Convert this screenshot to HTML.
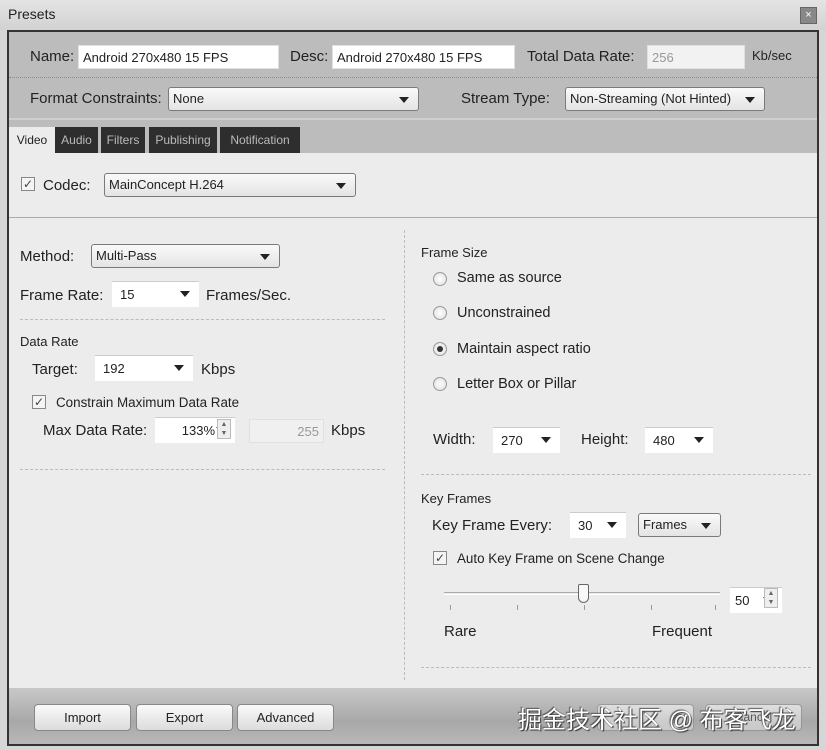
<!DOCTYPE html>
<html><head><meta charset="utf-8"><style>
*{box-sizing:border-box;margin:0;padding:0}
body{width:826px;height:750px;background:#d6d6d6;font-family:"Liberation Sans","DejaVu Sans",sans-serif;font-size:15px;color:#222;position:relative;overflow:hidden}
.a{position:absolute}
.inp{position:absolute;background:#fff;border:1px solid #e0e0e0;font-size:13px;padding:3px 4px;height:24px;line-height:17px;white-space:nowrap}
.sel{position:absolute;background:linear-gradient(#fafafa,#e4e4e4);border:1px solid #7a7a7a;border-radius:3px;font-size:13px;padding:3px 4px;height:24px;line-height:16px;white-space:nowrap}
.sel:after,.cmb:after{content:"";position:absolute;right:9px;top:9px;border-left:5px solid transparent;border-right:5px solid transparent;border-top:6px solid #222}
.cmb{position:absolute;background:#fff;border-top:1px solid #ccc;font-size:13px;padding:4px 8px;height:26px;line-height:17px}
.lbl{position:absolute;white-space:nowrap}
.cb{position:absolute;width:14px;height:14px;border:1px solid #888;background:#f4f4f4;font-size:12px;line-height:12px;text-align:center;color:#444}
.rd{position:absolute;width:14px;height:14px;border-radius:50%;border:1px solid #999;background:radial-gradient(#fff,#ddd)}
.rd.on:after{content:"";position:absolute;left:3px;top:3px;width:6px;height:6px;border-radius:50%;background:#333}
.dash{position:absolute;height:0;border-top:1px dashed #bbb}
.tab{position:absolute;top:127px;height:26px;background:#2e2e2e;color:#bbb;font-size:12px;line-height:26px;text-align:center}
.btn{position:absolute;top:704px;height:27px;border:1px solid #888;border-radius:4px;background:linear-gradient(#fafafa,#dcdcdc);font-size:13px;text-align:center;line-height:25px}
.spin{position:absolute;width:14px;height:20px;border:1px solid #bbb;background:#eee;font-size:7px;line-height:9px;text-align:center;color:#666}
.r{font-size:14.5px}
</style></head><body>
<div class="a" style="left:0;top:0;width:826px;height:30px;background:linear-gradient(#e4e4e4,#d2d2d2)"></div>
<div class="lbl" style="left:8px;top:6px;font-size:14px">Presets</div>
<div class="a" style="left:800px;top:7px;width:17px;height:17px;border:1px solid #666;background:#888;color:#fff;font-size:11px;text-align:center;line-height:15px">×</div>
<div class="a" style="left:7px;top:30px;width:812px;height:716px;border:2px solid #333;background:#ececec"></div>
<div class="a" style="left:9px;top:32px;width:808px;height:121px;background:#bcbcbc"></div>
<div class="a" style="left:9px;top:77px;width:808px;border-top:1px dotted #888"></div>
<div class="a" style="left:9px;top:118px;width:808px;height:2px;background:#cfcfcf"></div>
<div class="lbl" style="left:30px;top:48px">Name:</div>
<div class="inp" style="left:78px;top:45px;width:201px">Android 270x480 15 FPS</div>
<div class="lbl" style="left:290px;top:48px">Desc:</div>
<div class="inp" style="left:332px;top:45px;width:183px">Android 270x480 15 FPS</div>
<div class="lbl" style="left:527px;top:48px">Total Data Rate:</div>
<div class="inp" style="left:647px;top:45px;width:98px;color:#999;background:#f2f2f2">256</div>
<div class="lbl" style="left:752px;top:48px;font-size:13px">Kb/sec</div>
<div class="lbl" style="left:30px;top:90px">Format Constraints:</div>
<div class="sel" style="left:168px;top:87px;width:251px">None</div>
<div class="lbl" style="left:461px;top:90px">Stream Type:</div>
<div class="sel" style="left:565px;top:87px;width:200px">Non-Streaming (Not Hinted)</div>
<div class="a" style="left:9px;top:127px;width:46px;height:27px;background:#ececec;font-size:12px;line-height:27px;text-align:center">Video</div>
<div class="tab" style="left:55px;width:43px">Audio</div>
<div class="tab" style="left:101px;width:44px">Filters</div>
<div class="tab" style="left:149px;width:68px">Publishing</div>
<div class="tab" style="left:220px;width:80px">Notification</div>
<div class="cb" style="left:21px;top:177px">✓</div>
<div class="lbl" style="left:43px;top:177px">Codec:</div>
<div class="sel" style="left:104px;top:173px;width:252px">MainConcept H.264</div>
<div class="a" style="left:9px;top:217px;width:808px;border-top:1px solid #aaa"></div>
<div class="a" style="left:404px;top:230px;height:450px;border-left:1px dashed #bbb"></div>
<div class="lbl" style="left:20px;top:248px">Method:</div>
<div class="sel" style="left:91px;top:244px;width:189px">Multi-Pass</div>
<div class="lbl" style="left:20px;top:287px">Frame Rate:</div>
<div class="cmb" style="left:112px;top:281px;width:87px">15</div>
<div class="lbl" style="left:206px;top:287px">Frames/Sec.</div>
<div class="dash" style="left:20px;top:319px;width:365px"></div>
<div class="lbl" style="left:20px;top:334px;font-size:13px">Data Rate</div>
<div class="lbl" style="left:32px;top:361px">Target:</div>
<div class="cmb" style="left:95px;top:355px;width:98px">192</div>
<div class="lbl" style="left:201px;top:361px">Kbps</div>
<div class="cb" style="left:32px;top:395px">✓</div>
<div class="lbl" style="left:56px;top:395px;font-size:13.4px">Constrain Maximum Data Rate</div>
<div class="lbl" style="left:43px;top:422px">Max Data Rate:</div>
<div class="cmb" style="left:155px;top:417px;width:80px;text-align:right;padding-right:20px">133%</div>
<div class="spin" style="left:217px;top:419px">▲<br>▼</div>
<div class="inp" style="left:249px;top:419px;width:75px;text-align:right;color:#999;background:#f0f0f0">255</div>
<div class="lbl" style="left:331px;top:422px">Kbps</div>
<div class="dash" style="left:20px;top:469px;width:365px"></div>
<div class="lbl" style="left:421px;top:245px;font-size:13px">Frame Size</div>
<div class="rd" style="left:433px;top:272px"></div><div class="lbl r" style="left:457px;top:270px">Same as source</div>
<div class="rd" style="left:433px;top:306px"></div><div class="lbl r" style="left:457px;top:305px">Unconstrained</div>
<div class="rd on" style="left:433px;top:342px"></div><div class="lbl r" style="left:457px;top:341px">Maintain aspect ratio</div>
<div class="rd" style="left:433px;top:377px"></div><div class="lbl r" style="left:457px;top:376px">Letter Box or Pillar</div>
<div class="lbl" style="left:433px;top:431px">Width:</div>
<div class="cmb" style="left:493px;top:427px;width:67px">270</div>
<div class="lbl" style="left:581px;top:431px">Height:</div>
<div class="cmb" style="left:645px;top:427px;width:68px">480</div>
<div class="dash" style="left:421px;top:474px;width:390px"></div>
<div class="lbl" style="left:421px;top:491px;font-size:13px">Key Frames</div>
<div class="lbl" style="left:432px;top:517px">Key Frame Every:</div>
<div class="cmb" style="left:570px;top:512px;width:56px">30</div>
<div class="sel" style="left:638px;top:513px;width:83px">Frames</div>
<div class="cb" style="left:433px;top:551px">✓</div>
<div class="lbl" style="left:457px;top:551px;font-size:13.4px">Auto Key Frame on Scene Change</div>
<div class="a" style="left:444px;top:592px;width:276px;height:3px;border-top:1px solid #aaa;border-bottom:1px solid #fff"></div>
<div class="a" style="left:578px;top:584px;width:11px;height:19px;border:1px solid #666;border-radius:2px 2px 6px 6px;background:#f8f8f8"></div>
<div class="a" style="left:450px;top:605px;width:1px;height:5px;background:#999"></div>
<div class="a" style="left:517px;top:605px;width:1px;height:5px;background:#999"></div>
<div class="a" style="left:584px;top:605px;width:1px;height:5px;background:#999"></div>
<div class="a" style="left:651px;top:605px;width:1px;height:5px;background:#999"></div>
<div class="a" style="left:715px;top:605px;width:1px;height:5px;background:#999"></div>
<div class="cmb" style="left:730px;top:587px;width:52px;padding-left:5px">50</div>
<div class="spin" style="left:764px;top:588px">▲<br>▼</div>
<div class="lbl" style="left:444px;top:623px">Rare</div>
<div class="lbl" style="left:652px;top:623px">Frequent</div>
<div class="dash" style="left:421px;top:667px;width:390px"></div>
<div class="a" style="left:9px;top:688px;width:808px;height:56px;background:linear-gradient(#c8c8c8,#a8a8a8 60%,#b8b8b8)"></div>
<div class="btn" style="left:34px;width:97px">Import</div>
<div class="btn" style="left:136px;width:97px">Export</div>
<div class="btn" style="left:237px;width:97px">Advanced</div>
<div class="btn" style="left:597px;width:97px;opacity:.6"></div>
<div class="btn" style="left:705px;width:97px;opacity:.6;font-size:12px">Cancel</div>
<div class="lbl" style="left:518px;top:700px;font-size:24px;color:#fff;text-shadow:1px 1px 1px #333,-1px -1px 1px #555;font-family:'Liberation Sans','Noto Sans CJK SC',sans-serif">掘金技术社区 @ 布客飞龙</div>
</body></html>
